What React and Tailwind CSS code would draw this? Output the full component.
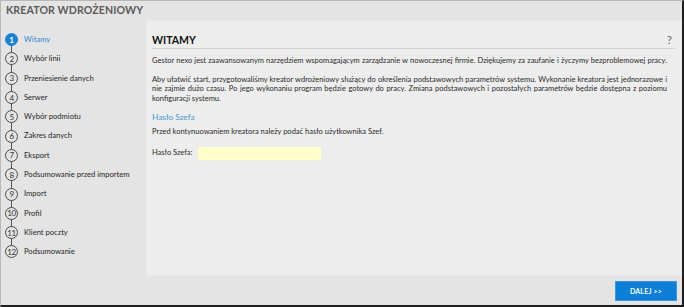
const STEPS = [
  "Witamy",
  "Wybór linii",
  "Przeniesienie danych",
  "Serwer",
  "Wybór podmiotu",
  "Zakres danych",
  "Eksport",
  "Podsumowanie przed importem",
  "Import",
  "Profil",
  "Klient poczty",
  "Podsumowanie",
];

const FONT = { fontFamily: 'Lato, "Noto Sans", Arial, sans-serif' };

export default function App() {
  return (
    <div
      style={FONT}
      className="w-[684px] h-[307px] flex flex-col bg-[#e4e4e4] border-l border-t border-[#b8b8b8] border-r-2 border-b-2 border-r-[#1e1e1e] border-b-[#1e1e1e] overflow-hidden"
    >
      {/* Title */}
      <div className="h-[19px] flex items-center pl-[5px]">
        <span className="text-[10.6px] font-bold text-[#5a5a5a] tracking-[0.1px]">KREATOR WDROŻENIOWY</span>
      </div>

      <div className="flex h-[256px]">
        {/* Steps */}
        <div className="w-[145px] shrink-0 pt-[10px]">
          <div className="relative">
            <div className="absolute left-[10px] top-[9px] bottom-[9px] w-px bg-[#555]" />
            {STEPS.map((s, i) => (
              <div key={s} className="relative h-[19.3px] flex items-center">
                <div
                  className={
                    i === 0
                      ? "ml-[4px] w-[13px] h-[13px] rounded-full bg-[#1682d8] border border-[#1682d8] text-white font-bold flex items-center justify-center text-[8px] leading-none"
                      : "ml-[4px] w-[13px] h-[13px] rounded-full bg-[#e4e4e4] border border-[#4a4a4a] text-[#333] flex items-center justify-center text-[8px] leading-none tracking-[-0.5px]"
                  }
                >
                  {i + 1}
                </div>
                <span
                  className={
                    i === 0
                      ? "ml-[6px] text-[7.6px] text-[#2e8ad6]"
                      : "ml-[6px] text-[7.6px] text-[#262626]"
                  }
                >
                  {s}
                </span>
              </div>
            ))}
          </div>
        </div>

        {/* Content panel */}
        <div className="flex-1 min-w-0 bg-[#ededed] border border-[#e8e8e8] pl-[5px] pr-[6px] text-[#2a2a2a]">
          <div className="flex items-end justify-between h-[28px] pb-[3px] border-b border-[#d2d2d2]">
            <span className="text-[10.5px] font-bold text-[#111] leading-none">WITAMY</span>
            <span className="text-[11px] text-[#666] leading-none pr-[3px]">?</span>
          </div>

          <div className="pr-[8px] text-[7.5px] leading-[9.6px]">
            <p className="mt-[7px] text-justify [text-align-last:justify]">
              Gestor nexo jest zaawansowanym narzędziem wspomagającym zarządzanie w nowoczesnej firmie. Dziękujemy za zaufanie i życzymy bezproblemowej pracy.
            </p>
            <div className="mt-[9px]">
              <p className="text-justify [text-align-last:justify]">
                Aby ułatwić start, przygotowaliśmy kreator wdrożeniowy służący do określenia podstawowych parametrów systemu. Wykonanie kreatora jest jednorazowe i
              </p>
              <p className="text-justify [text-align-last:justify]">
                nie zajmie dużo czasu. Po jego wykonaniu program będzie gotowy do pracy. Zmiana podstawowych i pozostałych parametrów będzie dostępna z poziomu
              </p>
              <p>konfiguracji systemu.</p>
            </div>

            <p className="mt-[10px] text-[8.3px] text-[#3c9ad6]">Hasło Szefa</p>
            <p className="mt-[4px]">Przed kontynuowaniem kreatora należy podać hasło użytkownika Szef.</p>

            <div className="mt-[10px] flex items-center">
              <span className="w-[46px]">Hasło Szefa:</span>
              <div className="w-[123px] h-[13px] bg-[#ffffc8]" />
            </div>
          </div>
        </div>
      </div>

      {/* Footer */}
      <div className="flex-1 flex justify-end items-start pt-[5px] pr-[5px]">
        <button className="w-[62px] h-[20px] bg-[#0b7ed8] border border-[#3b97e0] text-white text-[7px] font-bold tracking-[0.2px]">
          DALEJ &gt;&gt;
        </button>
      </div>
    </div>
  );
}
